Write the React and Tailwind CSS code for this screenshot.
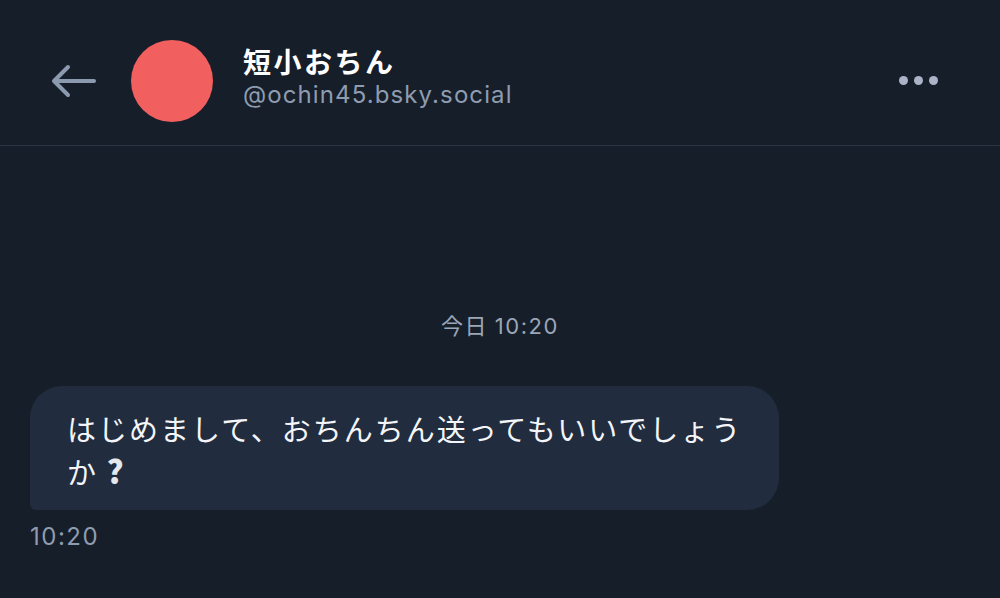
export default function App() {
  return (
    <div
      className="flex h-[598px] w-[1000px] flex-col bg-[#161e2a] text-white"
      style={{ fontFamily: '"Noto Sans CJK JP", "Noto Sans", sans-serif' }}
    >
      {/* header */}
      <div className="flex h-[146px] items-center border-b border-[#2a3443] pt-[16px]">
        <button className="ml-[50px] flex h-[40px] w-[48px] items-center justify-center text-[#8c9ab0]">
          <svg width="48" height="36" viewBox="0 0 48 36" fill="none" stroke="currentColor" strokeWidth="4" strokeLinecap="round" strokeLinejoin="round">
            <path d="M44 18H5" />
            <path d="M18 4L4 18l14 14" />
          </svg>
        </button>
        <div className="ml-[33px] h-[82px] w-[82px] rounded-full bg-[#f25f5f]" />
        <div className="ml-[30px] flex flex-col -mt-[8px]">
          <span className="text-[28px] font-bold leading-[36px] tracking-[2.5px]">短小おちん</span>
          <span className="text-[24px] leading-[32px] tracking-[1.1px] text-[#8f9cb0]" style={{ fontFamily: '"Inter", "Noto Sans", sans-serif' }}>
            @ochin45.bsky.social
          </span>
        </div>
        <div className="ml-auto mr-[62px] flex gap-[6px]">
          <span className="h-[9px] w-[9px] rounded-full bg-[#aab4c6]" />
          <span className="h-[9px] w-[9px] rounded-full bg-[#aab4c6]" />
          <span className="h-[9px] w-[9px] rounded-full bg-[#aab4c6]" />
        </div>
      </div>

      {/* messages */}
      <div className="flex flex-1 flex-col px-[30px]">
        <div className="mt-[163px] text-center text-[22px] leading-[30px] tracking-[1.6px] text-[#9ba6b7]">
          今日 <span style={{ fontFamily: '"Inter", sans-serif' }}>10:20</span>
        </div>
        <div className="mt-[45px] w-[749px] rounded-[32px] rounded-bl-[6px] bg-[#212c3e] pt-[21px] pb-[18px] pl-[37px] pr-[10px] text-[29px] leading-[42px] tracking-[2px] text-[#f3f5f8]">
          はじめまして、おちんちん送ってもいいでしょう
          <br />
          か <span className="text-[32px] font-black text-[#e4e7ec]">?</span>
        </div>
        <div className="mt-[11px] text-[24px] leading-[32px] tracking-[1.5px] text-[#8f9cb0]" style={{ fontFamily: '"Inter", sans-serif' }}>
          10:20
        </div>
      </div>
    </div>
  )
}
